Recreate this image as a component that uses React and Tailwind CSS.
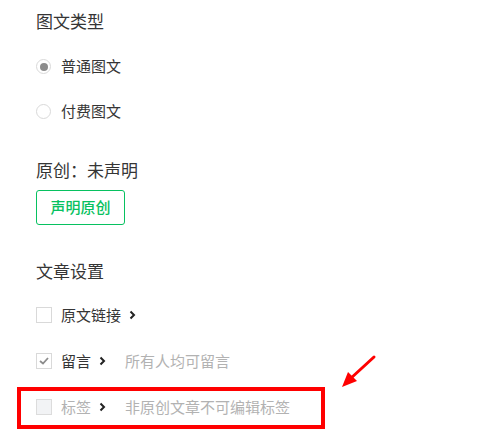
const font = { fontFamily: '"Noto Sans CJK SC", "Noto Sans", sans-serif' };

function Radio({ checked, label }) {
  return (
    <div className="flex h-[45px] items-center">
      <span className="flex h-[15px] w-[15px] items-center justify-center rounded-full border border-[#d9d9d9] bg-white">
        {checked && <span className="h-[8px] w-[8px] rounded-full bg-[#8c8c8c]" />}
      </span>
      <span className="ml-[10px] text-[15px] text-[#353535]">{label}</span>
    </div>
  );
}

function Chevron() {
  return (
    <svg width="7" height="10" viewBox="0 0 7 10" className="ml-[8px]">
      <path d="M1.5 1.5 L5 5 L1.5 8.5" fill="none" stroke="#222" strokeWidth="2" />
    </svg>
  );
}

function CheckRow({ checked, disabled, label, hint }) {
  return (
    <div className="flex h-[46px] items-center">
      <span
        className={
          "flex h-[16px] w-[16px] items-center justify-center border " +
          (disabled ? "border-[#dcdcdc] bg-[#f2f3f5]" : "border-[#d9d9d9] bg-white")
        }
      >
        {checked && (
          <svg width="10" height="8" viewBox="0 0 10 8">
            <path d="M1 4 L4 6.5 L9 1" fill="none" stroke="#8c8c8c" strokeWidth="1.8" />
          </svg>
        )}
      </span>
      <span className={"ml-[9px] text-[15px] " + (disabled ? "text-[#b2b2b2]" : "text-[#353535]")}>{label}</span>
      <Chevron />
      {hint && <span className="ml-[19px] text-[15px] text-[#b2b2b2]">{hint}</span>}
    </div>
  );
}

export default function App() {
  return (
    <div className="relative h-[431px] w-[504px] overflow-hidden bg-white pl-[36px] pt-[9px]" style={font}>
      <div className="text-[17px] leading-[24px] text-[#353535]">图文类型</div>
      <div className="mt-[11px]">
        <Radio checked label="普通图文" />
        <Radio label="付费图文" />
      </div>

      <div className="mt-[24px] text-[17px] leading-[24px] text-[#353535]">原创：未声明</div>
      <button className="mt-[8px] flex h-[35px] w-[89px] items-center justify-center rounded-[3px] border border-[#07c160] text-[15px] font-medium text-[#07c160]">
        声明原创
      </button>

      <div className="mt-[34px] text-[17px] leading-[24px] text-[#353535]">文章设置</div>
      <div className="mt-[9px]">
        <CheckRow label="原文链接" />
        <CheckRow checked label="留言" hint="所有人均可留言" />
        <div className="relative">
          <CheckRow disabled label="标签" hint="非原创文章不可编辑标签" />
          <span className="absolute left-[-19px] top-[3px] h-[42px] w-[308px] border-[4px] border-[#ff0000]" />
        </div>
      </div>

      <svg className="absolute left-[336px] top-[350px]" width="44" height="44" viewBox="0 0 44 44">
        <path d="M38 7 L14 29" stroke="#ff0000" strokeWidth="3" strokeLinecap="round" />
        <path d="M6 37 L12 22 L21 31 Z" fill="#ff0000" />
      </svg>
    </div>
  );
}
